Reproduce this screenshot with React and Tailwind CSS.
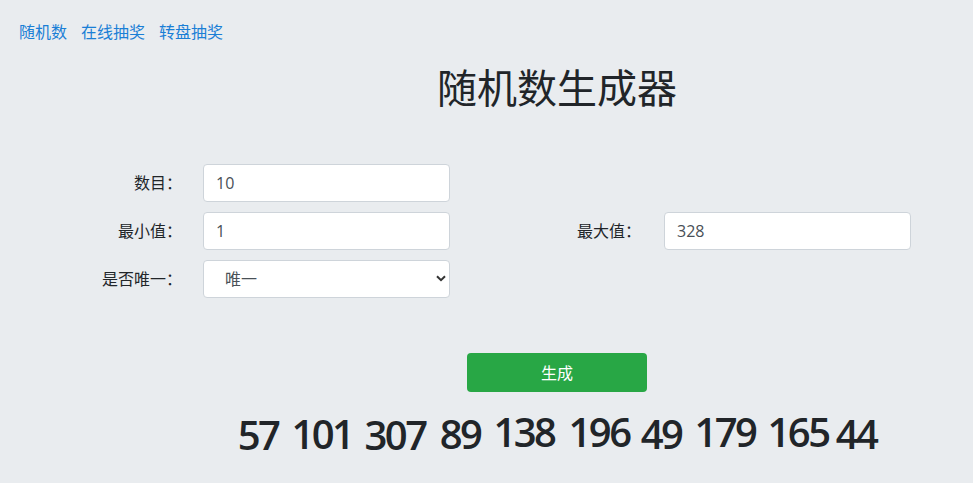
import { useState } from "react";

const numbers = [
  { v: 57, cls: "ml-0 translate-y-[1px]" },
  { v: 101, cls: "ml-[13px]" },
  { v: 307, cls: "ml-[12px] translate-y-[1px]" },
  { v: 89, cls: "ml-[14px]" },
  { v: 138, cls: "ml-[13px] -translate-y-[2px]" },
  { v: 196, cls: "ml-[14px] -translate-y-[2px]" },
  { v: 49, cls: "ml-[11px]" },
  { v: 179, cls: "ml-[13px] -translate-y-[2px]" },
  { v: 165, cls: "ml-[12px] -translate-y-[2px]" },
  { v: 44, cls: "ml-[7px]" },
];

export default function App() {
  const [count, setCount] = useState("10");
  const [min, setMin] = useState("1");
  const [max, setMax] = useState("328");
  const [unique, setUnique] = useState("1");

  const inputCls =
    "w-[247px] h-[38px] px-3 bg-white border border-[#ced4da] rounded text-base text-[#495057] focus:outline-none";

  return (
    <div className="min-h-screen bg-[#e9ecef] text-[#212529] font-['Open_Sans','Noto_Sans_CJK_SC',sans-serif]">
      {/* top links */}
      <nav className="flex gap-[14px] pl-[19px] pt-5 text-base leading-6 text-[#1a7fd6]">
        <a href="#">随机数</a>
        <a href="#">在线抽奖</a>
        <a href="#">转盘抽奖</a>
      </nav>

      <div className="pl-[141px]">
        <h1 className="mt-5 text-center text-[40px] leading-[48px] font-normal">随机数生成器</h1>
      </div>

      {/* form */}
      <div className="mt-[52px] grid grid-cols-[203px_247px_214px_247px] gap-y-[10px] items-center text-base">
        <label className="pr-[21px] text-right">数目：</label>
        <input className={inputCls} value={count} onChange={(e) => setCount(e.target.value)} />
        <div />
        <div />

        <label className="pr-[21px] text-right">最小值：</label>
        <input className={inputCls} value={min} onChange={(e) => setMin(e.target.value)} />
        <label className="pr-[23px] text-right">最大值：</label>
        <input className={inputCls} value={max} onChange={(e) => setMax(e.target.value)} />

        <label className="pr-[21px] text-right">是否唯一：</label>
        <div className="relative w-[247px]">
          <select
            className="w-full h-[38px] pl-[21px] pr-8 bg-white border border-[#ced4da] rounded text-base text-[#495057] appearance-none focus:outline-none"
            value={unique}
            onChange={(e) => setUnique(e.target.value)}
          >
            <option value="1">唯一</option>
            <option value="0">不唯一</option>
          </select>
          <svg className="pointer-events-none absolute right-[4px] top-[15px] w-[10px] h-[7px]" viewBox="0 0 10 7" fill="none">
            <path d="M1 1.2 5 5.2 9 1.2" stroke="#333" strokeWidth="2" />
          </svg>
        </div>
      </div>

      <div className="pl-[141px]">
        <div className="mt-[55px] flex justify-center">
          <button className="w-[180px] h-[39px] rounded bg-[#28a745] text-white text-base">生成</button>
        </div>

        <div className="mt-[18px] flex justify-center text-[40px] leading-[48px] font-semibold tracking-[-2.5px] text-[#212529]">
          {numbers.map((n, i) => (
            <span key={i} className={`inline-block ${n.cls}`}>{n.v}</span>
          ))}
        </div>
      </div>
    </div>
  );
}
